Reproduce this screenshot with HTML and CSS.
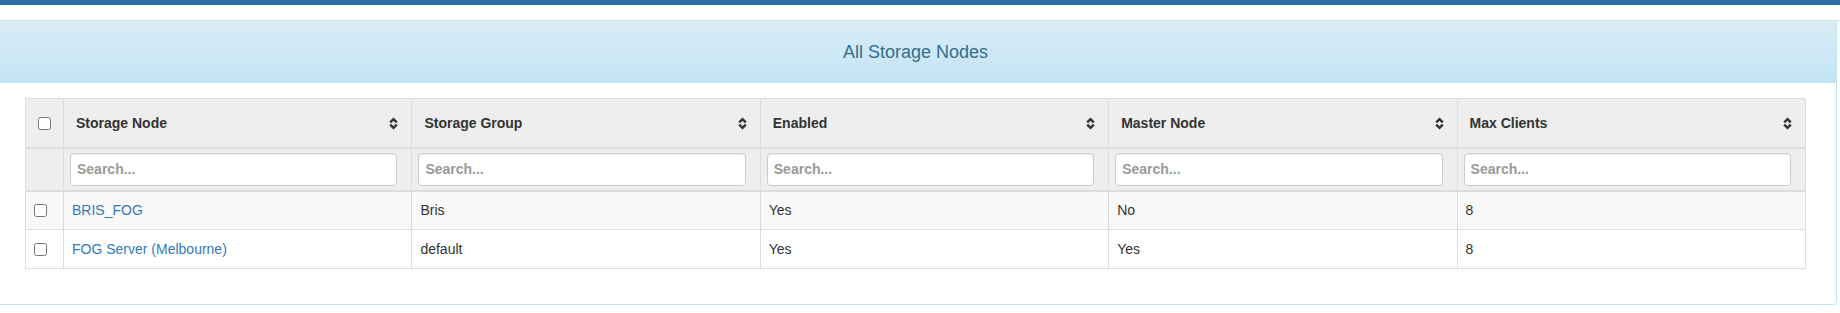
FILE: index.html
```html
<!DOCTYPE html>
<html>
<head>
<meta charset="utf-8">
<link rel="stylesheet" href="styles.css">
</head>
<body>
<div class="topbar"></div>
<div class="spacer"></div>
<div class="panel">
  <div class="panel-heading">All Storage Nodes</div>
  <div class="panel-body">
    <table class="grid">
      <colgroup>
        <col class="col-check">
        <col><col><col><col><col>
      </colgroup>
      <thead>
        <tr class="head-row">
          <th class="check-head"><input type="checkbox"></th>
          <th><div class="th-inner"><span>Storage Node</span><svg class="sort" width="9" height="13" viewBox="0 0 9 13"><path d="M1.2 5.4 L4.5 2.1 L7.8 5.4 M1.2 7.6 L4.5 10.9 L7.8 7.6" fill="none" stroke="#333" stroke-width="2.4"/></svg></div></th>
          <th><div class="th-inner"><span>Storage Group</span><svg class="sort" width="9" height="13" viewBox="0 0 9 13"><path d="M1.2 5.4 L4.5 2.1 L7.8 5.4 M1.2 7.6 L4.5 10.9 L7.8 7.6" fill="none" stroke="#333" stroke-width="2.4"/></svg></div></th>
          <th><div class="th-inner"><span>Enabled</span><svg class="sort" width="9" height="13" viewBox="0 0 9 13"><path d="M1.2 5.4 L4.5 2.1 L7.8 5.4 M1.2 7.6 L4.5 10.9 L7.8 7.6" fill="none" stroke="#333" stroke-width="2.4"/></svg></div></th>
          <th><div class="th-inner"><span>Master Node</span><svg class="sort" width="9" height="13" viewBox="0 0 9 13"><path d="M1.2 5.4 L4.5 2.1 L7.8 5.4 M1.2 7.6 L4.5 10.9 L7.8 7.6" fill="none" stroke="#333" stroke-width="2.4"/></svg></div></th>
          <th><div class="th-inner"><span>Max Clients</span><svg class="sort" width="9" height="13" viewBox="0 0 9 13"><path d="M1.2 5.4 L4.5 2.1 L7.8 5.4 M1.2 7.6 L4.5 10.9 L7.8 7.6" fill="none" stroke="#333" stroke-width="2.4"/></svg></div></th>
        </tr>
        <tr class="search-row">
          <th></th>
          <th><input class="search" type="text" placeholder="Search..."></th>
          <th><input class="search" type="text" placeholder="Search..."></th>
          <th><input class="search" type="text" placeholder="Search..."></th>
          <th><input class="search" type="text" placeholder="Search..."></th>
          <th><input class="search" type="text" placeholder="Search..."></th>
        </tr>
      </thead>
      <tbody>
        <tr class="odd">
          <td class="check-cell"><input type="checkbox"></td>
          <td><a href="#">BRIS_FOG</a></td>
          <td>Bris</td>
          <td>Yes</td>
          <td>No</td>
          <td>8</td>
        </tr>
        <tr class="even">
          <td class="check-cell"><input type="checkbox"></td>
          <td><a href="#">FOG Server (Melbourne)</a></td>
          <td>default</td>
          <td>Yes</td>
          <td>Yes</td>
          <td>8</td>
        </tr>
      </tbody>
    </table>
  </div>
</div>
</body>
</html>
```

FILE: styles.css
```css
* { box-sizing: border-box; }
html, body { margin: 0; padding: 0; background: #fff; }
body {
  font-family: "Liberation Sans", Arial, Helvetica, sans-serif;
  font-size: 14px;
  line-height: 20px;
  color: #333;
  overflow: hidden;
}
.topbar { height: 5px; background: #2d6ba3; }
.spacer { height: 16px; border-bottom: 1px solid #dcdcdc; }
.panel {
  margin: 0 3px 0 -6px;
  border: 1px solid #bce8f1;
  border-top: 0;
  border-radius: 0 0 4px 4px;
  background: #fff;
}
.panel-heading {
  height: 62px;
  border-bottom: 1px solid #bce8f1;
  background: linear-gradient(to bottom, #d9edf7 0%, #c4e3f3 100%);
  color: #31708f;
  font-size: 18px;
  display: flex;
  align-items: center;
  justify-content: center;
  padding-top: 1px;
}
.panel-body { padding: 15px 30px; }
.grid {
  width: 100%;
  table-layout: fixed;
  border-collapse: collapse;
  margin-bottom: 20px;
}
.col-check { width: 38px; }
.grid th, .grid td {
  border: 1px solid #ddd;
  text-align: left;
  vertical-align: middle;
}
.grid thead th { background: #eee; font-weight: bold; border-bottom: 2px solid #ddd; }
.head-row th { height: 49px; padding: 1px 14px 0 12px; }
.th-inner { display: flex; align-items: center; justify-content: space-between; }
.sort { display: block; flex: none; margin-right: -1px; }
.check-head { text-align: center !important; padding: 0 !important; }
.check-head input, .check-cell input { margin: 0; width: 13px; height: 13px; display: block; }
.check-head input { margin: 1px auto 0; }
.search-row th { height: 43px; padding: 0 14px 0 6px; }
.search {
  display: block;
  width: 100%;
  height: 33px;
  border: 1px solid #ccc;
  border-radius: 4px;
  padding: 0 6px;
  font-family: "Liberation Sans", Arial, sans-serif;
  font-size: 14px;
  font-weight: bold;
  color: #555;
  background: #fff;
  box-shadow: inset 0 1px 1px rgba(0,0,0,0.075);
}
.search::placeholder { color: #999; opacity: 1; }
.grid td { height: 39px; padding: 0 8px; }
.grid td.check-cell { padding: 0 8px; }
.odd td { background: #f9f9f9; }
.even td { background: #fff; }
a { color: #337ab7; text-decoration: none; }
```
